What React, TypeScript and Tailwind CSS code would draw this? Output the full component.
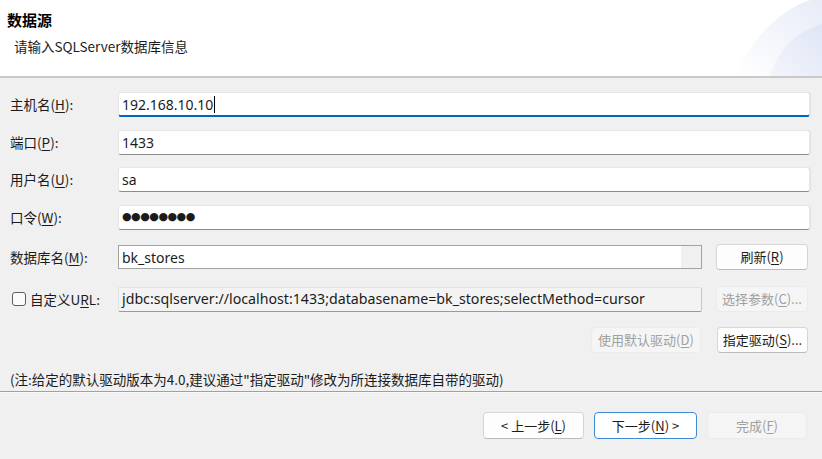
import React from 'react';

const cjk = { fontFamily: '"Noto Sans CJK SC", "Noto Sans", sans-serif' };
const latin = { fontFamily: '"Noto Sans", "Noto Sans CJK SC", sans-serif' };

function Key({ k }: { k: string }) {
  return <span className="underline underline-offset-2">{k}</span>;
}

function Label({ text, k, tail = '):' }: { text: string; k: string; tail?: string }) {
  return (
    <div className="w-[108px] shrink-0 text-[13.5px] text-[#1b1b1b]">
      {text}(<Key k={k} />{tail}
    </div>
  );
}

function TextBox({ children, focused = false }: { children: React.ReactNode; focused?: boolean }) {
  return (
    <div
      className={`flex h-[25px] flex-1 items-center rounded-[3px] border border-[#e6e6e6] bg-white px-[3px] text-[14px] text-[#1b1b1b] shadow-[1px_0_1px_rgba(0,0,0,0.06)] ${
        focused ? 'border-b-2 border-b-[#0067c0]' : 'border-b-[#8c8c8c]'
      }`}
      style={latin}
    >
      {children}
    </div>
  );
}

function Button({
  children,
  disabled = false,
  primary = false,
  className = '',
}: {
  children: React.ReactNode;
  disabled?: boolean;
  primary?: boolean;
  className?: string;
}) {
  const tone = disabled
    ? 'bg-[#f5f5f5] border-[#ebebeb] text-[#a0a0a0]'
    : primary
    ? 'bg-white border-[#3c8ad6] text-[#1b1b1b]'
    : 'bg-[#fdfdfd] border-[#d6d6d6] border-b-[#bcbcbc] text-[#1b1b1b]';
  return (
    <button
      type="button"
      className={`flex h-[26px] items-center justify-center rounded-[4px] border text-[13px] ${tone} ${className}`}
      style={cjk}
    >
      {children}
    </button>
  );
}

export default function App() {
  return (
    <div className="flex h-[459px] w-[822px] flex-col overflow-hidden bg-[#f0f0f0]" style={cjk}>
      {/* Header */}
      <div className="relative h-[76px] shrink-0 bg-white">
        <div className="pl-[7px] pt-[9px] text-[15px] font-bold leading-[22px] text-black">数据源</div>
        <div className="pl-[14px] pt-[5px] text-[13.5px] leading-[20px] text-[#1b1b1b]">请输入SQLServer数据库信息</div>
        <svg className="absolute right-0 top-0" width="92" height="76" viewBox="0 0 92 76">
          <defs>
            <linearGradient id="g1" x1="0" y1="1" x2="1" y2="0">
              <stop offset="0" stopColor="#ffffff" />
              <stop offset="1" stopColor="#e8ecf8" />
            </linearGradient>
            <linearGradient id="g2" x1="0" y1="1" x2="1" y2="0">
              <stop offset="0" stopColor="#f3f5fb" />
              <stop offset="1" stopColor="#dfe5f5" />
            </linearGradient>
          </defs>
          <path d="M4 76 C 20 40, 50 10, 80 0 L92 0 L92 76 Z" fill="url(#g1)" />
          <path d="M40 76 C 48 50, 65 32, 92 24 L92 76 Z" fill="url(#g2)" />
        </svg>
      </div>
      <div className="h-[2px] shrink-0 bg-[#c9c9c9]" />

      {/* Form */}
      <div className="flex flex-col pl-[10px] pr-[12px]">
        <div className="mt-[14px] flex h-[25px] items-center">
          <Label text="主机名" k="H" />
          <TextBox focused>
            <span>192.168.10.10</span>
            <span className="ml-px h-[17px] w-px bg-black" />
          </TextBox>
        </div>
        <div className="mt-[13px] flex h-[25px] items-center">
          <Label text="端口" k="P" />
          <TextBox>1433</TextBox>
        </div>
        <div className="mt-[12px] flex h-[25px] items-center">
          <Label text="用户名" k="U" />
          <TextBox>sa</TextBox>
        </div>
        <div className="mt-[13px] flex h-[25px] items-center">
          <Label text="口令" k="W" />
          <TextBox>
            <span className="text-[11px] tracking-[-0.5px]" style={{ fontFamily: '"DejaVu Sans", sans-serif' }}>
              ●●●●●●●●
            </span>
          </TextBox>
        </div>

        <div className="mt-[14px] flex h-[26px] items-center">
          <Label text="数据库名" k="M" />
          <div className="flex h-[24px] flex-1 items-stretch border border-[#a3a3a3] bg-white" style={latin}>
            <div className="flex flex-1 items-center px-[3px] text-[14px] text-[#1b1b1b]">bk_stores</div>
            <div className="w-[20px] bg-[#f0f0f0]" />
          </div>
          <Button className="ml-[14px] mr-[2px] w-[92px]">
            刷新(<Key k="R" />)
          </Button>
        </div>

        <div className="mt-[16px] flex h-[26px] items-center">
          <div className="flex w-[108px] shrink-0 items-center text-[13.5px] text-[#1b1b1b]">
            <span className="ml-[2px] mr-[4px] h-[14px] w-[14px] rounded-[3px] border border-[#5f5f5f] bg-[#fbfbfb]" />
            自定义U<Key k="R" />L:
          </div>
          <div
            className="flex h-[25px] flex-1 items-center rounded-[2px] border border-[#e2e2e2] border-b-[#9a9a9a] border-r-[#c8c8c8] bg-[#f3f3f3] px-[3px] text-[14.2px] text-[#1b1b1b]"
            style={latin}
          >
            jdbc:sqlserver://localhost:1433;databasename=bk_stores;selectMethod=cursor
          </div>
          <Button disabled className="ml-[14px] mr-[2px] w-[92px]">
            选择参数(<Key k="C" />)...
          </Button>
        </div>

        <div className="mt-[15px] flex h-[26px] items-center justify-end">
          <Button disabled className="w-[110px]">
            使用默认驱动(<Key k="D" />)
          </Button>
          <Button className="ml-[16px] mr-[2px] w-[91px]">
            指定驱动(<Key k="S" />)...
          </Button>
        </div>

        <div className="mt-[17px] text-[13.5px] leading-[18px] text-[#1b1b1b]">
          (注:给定的默认驱动版本为4.0,建议通过"指定驱动"修改为所连接数据库自带的驱动)
        </div>
      </div>

      <div className="mt-[3px] h-px shrink-0 bg-[#a0a0a0]" />
      <div className="h-px shrink-0 bg-white/60" />

      {/* Footer */}
      <div className="flex flex-1 justify-end gap-[10px] pr-[15px] pt-[19px]">
        <Button className="h-[27px] w-[101px]">
          &lt; 上一步(<Key k="L" />)
        </Button>
        <Button primary className="h-[27px] w-[103px]">
          下一步(<Key k="N" />) &gt;
        </Button>
        <Button disabled className="h-[27px] w-[100px]">
          完成(<Key k="F" />)
        </Button>
      </div>
    </div>
  );
}
